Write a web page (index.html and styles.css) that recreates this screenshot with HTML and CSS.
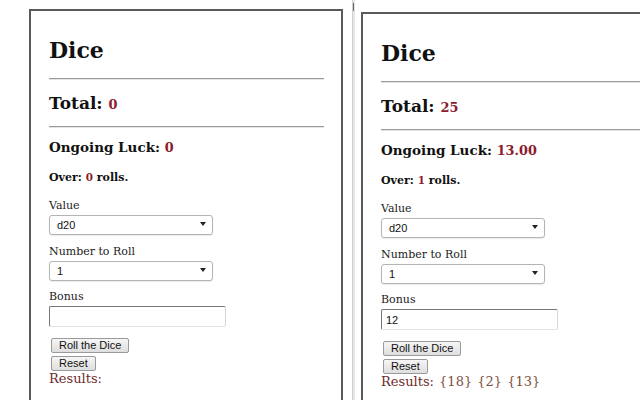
FILE: index.html
```html
<!DOCTYPE html>
<html>
<head>
<meta charset="utf-8">
<link rel="stylesheet" href="styles.css">
</head>
<body>
<div class="stage">
  <div class="panel panel-left">
    <h1 class="title">Dice</h1>
    <hr class="rule">
    <h2 class="total">Total: <span class="num">0</span></h2>
    <hr class="rule">
    <h3 class="luck">Ongoing Luck: <span class="num">0</span></h3>
    <h4 class="over">Over: <span class="num">0</span> rolls.</h4>
    <label class="lbl lbl-first">Value</label>
    <div class="selwrap"><select class="sel"><option>d20</option></select><span class="arrow"></span></div>
    <label class="lbl">Number to Roll</label>
    <div class="selwrap"><select class="sel"><option>1</option></select><span class="arrow"></span></div>
    <label class="lbl lbl-bonus">Bonus</label>
    <input class="bonus" type="text" value="">
    <button class="btn btn-roll">Roll the Dice</button>
    <button class="btn btn-reset">Reset</button>
    <div class="results">Results:</div>
  </div>
  <div class="splitter"><span class="grip"></span></div>
  <div class="panel panel-right">
    <h1 class="title">Dice</h1>
    <hr class="rule">
    <h2 class="total">Total: <span class="num">25</span></h2>
    <hr class="rule">
    <h3 class="luck">Ongoing Luck: <span class="num">13.00</span></h3>
    <h4 class="over">Over: <span class="num">1</span> rolls.</h4>
    <label class="lbl lbl-first">Value</label>
    <div class="selwrap"><select class="sel"><option>d20</option></select><span class="arrow"></span></div>
    <label class="lbl">Number to Roll</label>
    <div class="selwrap"><select class="sel"><option>1</option></select><span class="arrow"></span></div>
    <label class="lbl lbl-bonus">Bonus</label>
    <input class="bonus" type="text" value="12">
    <button class="btn btn-roll">Roll the Dice</button>
    <button class="btn btn-reset">Reset</button>
    <div class="results">Results: <span class="res">{18}</span> <span class="res">{2}</span> <span class="res">{13}</span></div>
  </div>
</div>
</body>
</html>
```
FILE: styles.css
```css
html, body {
  margin: 0;
  padding: 0;
  background: #ffffff;
}
body {
  width: 640px;
  height: 400px;
  overflow: hidden;
}
.stage {
  display: flex;
  align-items: flex-start;
  height: 400px;
  overflow: hidden;
}
.panel {
  flex-shrink: 0;
  box-sizing: border-box;
  border: 2px solid #5a5a5a;
  padding: 26px 17px 0 18px;
  min-height: 440px;
  display: flex;
  flex-direction: column;
  align-items: flex-start;
  font-family: "DejaVu Serif", serif;
  color: #111;
  background: #fff;
}
.panel-left {
  margin-left: 29px;
  margin-top: 9px;
  width: 314px;
}
.panel-right {
  margin-left: 6px;
  margin-top: 12px;
  width: 330px;
}
.splitter {
  flex-shrink: 0;
  margin-left: 9px;
  width: 3px;
  height: 400px;
  background: #e6e6e6;
  border-left: 1px solid #d0d0d0;
  box-sizing: border-box;
  position: relative;
}
.grip {
  position: absolute;
  left: 0;
  top: 3px;
  width: 1px;
  height: 8px;
  background: #666;
}
.title {
  margin: 0;
  font-size: 22px;
  line-height: 26px;
  font-weight: bold;
}
.rule {
  align-self: stretch;
  margin: 15px 0 0 0;
  height: 0;
  border: 0;
  border-top: 1px solid #9a9a9a;
  border-bottom: 1px solid #e4e4e4;
}
.total {
  margin: 13px 0 0 0;
  font-size: 17px;
  line-height: 20px;
  font-weight: bold;
}
.total + .rule {
  margin-top: 13px;
}
.num {
  color: #8a1d2e;
  font-size: 0.76em;
  line-height: 1;
}
.luck .num, .over .num {
  font-size: 0.95em;
}
.luck {
  margin: 11px 0 0 0;
  font-size: 13.5px;
  line-height: 16px;
  font-weight: bold;
}
.over {
  margin: 16px 0 0 0;
  font-size: 11px;
  line-height: 14px;
  font-weight: bold;
}
.lbl {
  display: block;
  margin-top: 11px;
  font-size: 11px;
  line-height: 13px;
  color: #222;
}
.lbl-first {
  margin-top: 14px;
}
.lbl-bonus {
  margin-top: 10px;
}
.selwrap {
  position: relative;
  margin-top: 2px;
  width: 164px;
  height: 20px;
}
.sel {
  -webkit-appearance: none;
  appearance: none;
  box-sizing: border-box;
  width: 164px;
  height: 20px;
  margin: 0;
  padding: 0 0 0 7px;
  border: 1px solid #b4b4b4;
  border-radius: 3px;
  background: #fff;
  font-family: "Liberation Sans", Arial, sans-serif;
  font-size: 11px;
  color: #111;
  box-shadow: 0 1px 1px rgba(0,0,0,0.08);
}
.arrow {
  position: absolute;
  right: 7px;
  top: 8px;
  width: 0;
  height: 0;
  border-left: 3px solid transparent;
  border-right: 3px solid transparent;
  border-top: 4px solid #222;
}
.bonus {
  box-sizing: border-box;
  margin: 3px 0 0 0;
  width: 177px;
  height: 21px;
  padding: 0 0 0 4px;
  border-top: 1px solid #777;
  border-left: 1px solid #777;
  border-right: 1px solid #d6d6d6;
  border-bottom: 1px solid #e2e2e2;
  border-radius: 2px;
  font-family: "Liberation Sans", Arial, sans-serif;
  font-size: 11px;
  color: #111;
  background: #fff;
}
.btn {
  box-sizing: border-box;
  margin: 0 0 0 2px;
  height: 15px;
  padding: 0 7px;
  border: 1px solid #9a9a9a;
  border-radius: 2px;
  background: linear-gradient(#f6f6f6, #dedede);
  font-family: "Liberation Sans", Arial, sans-serif;
  font-size: 11px;
  line-height: 13px;
  color: #111;
}
.btn-roll {
  margin-top: 11px;
}
.btn-reset {
  margin-top: 3px;
}
.results {
  margin-top: 0;
  font-size: 13px;
  line-height: 15px;
  color: #6e2b2b;
  word-spacing: 1px;
}
.res {
  color: #7e4f3e;
}
```
